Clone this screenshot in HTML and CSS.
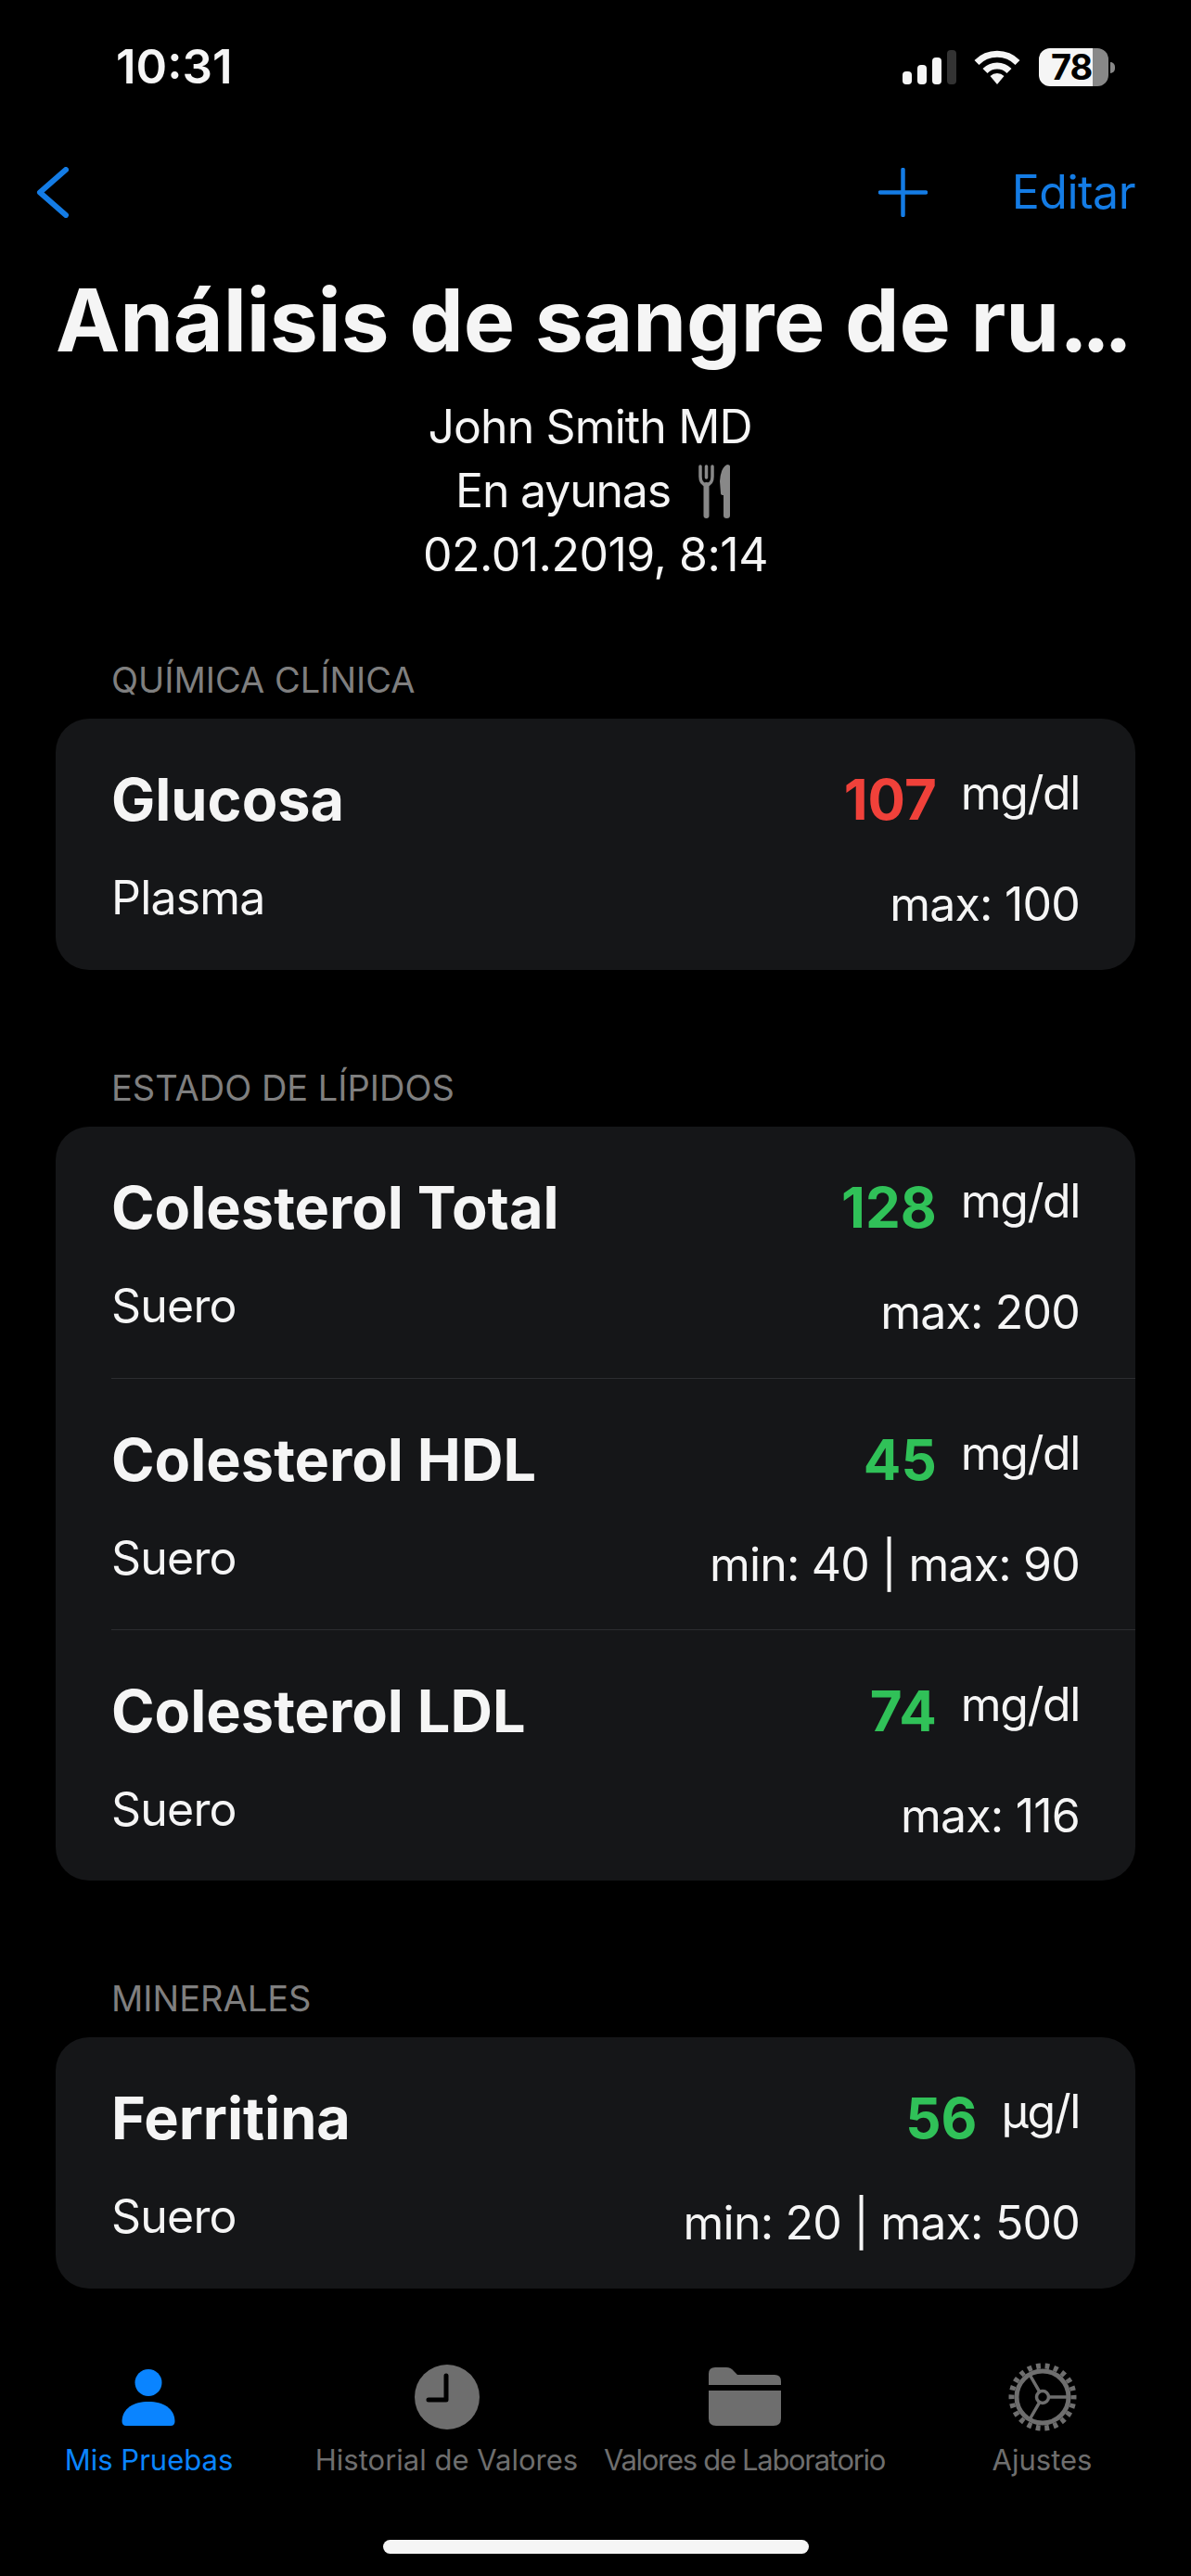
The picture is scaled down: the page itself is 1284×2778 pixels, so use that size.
FILE: index.html
```html
<!DOCTYPE html>
<html>
<head>
	<title>Análisis de sangre</title>
	<meta name="viewport" content="width=device-width,initial-scale=1">
	<link rel="stylesheet" href="styles.css">
</head>
<body>
	<div class="screen">
		<div class="status">
			<span class="time">10:31</span>
			<div class="status-icons">
				<svg class="signal" width="58" height="37" viewBox="0 0 58 37">
					<rect x="0" y="23" width="10" height="14" rx="4" fill="#f5f5f5"/>
					<rect x="16" y="16" width="10" height="21" rx="4" fill="#f5f5f5"/>
					<rect x="32" y="8" width="10" height="29" rx="4" fill="#f5f5f5"/>
					<rect x="48" y="0" width="10" height="37" rx="4" fill="#333"/>
				</svg>
				<svg class="wifi" width="50" height="37" viewBox="0 0 50 37">
					<path d="M3 13.500 A31 31 0 0 1 47 13.500" fill="none" stroke="#f5f5f5" stroke-width="7" />
					<path d="M12 22.500 A18 18 0 0 1 38 22.500" fill="none" stroke="#f5f5f5" stroke-width="7" />
					<path d="M17.500 28 A11 11 0 0 1 32.500 28 L25 37 Z" fill="#f5f5f5"/>
				</svg>
				<div class="battery"><span class="battery-level">78</span></div>
				<span class="battery-cap"></span>
			</div>
		</div>

		<div class="nav">
			<svg width="35" height="55" viewBox="0 0 35 55">
				<path d="M32 3 L4 27.500 L32 52" fill="none" stroke="#147ce5" stroke-width="6" stroke-linecap="round" stroke-linejoin="round"/>
			</svg>
			<div class="nav-right">
				<svg width="53" height="53" viewBox="0 0 53 53">
					<path d="M26.500 2 V51 M2 26.500 H51" fill="none" stroke="#147ce5" stroke-width="4.500" stroke-linecap="round"/>
				</svg>
				<span class="edit">Editar</span>
			</div>
		</div>

		<h1 class="title">Análisis de sangre de ru<span class="title-dots">...</span></h1>

		<div class="meta">
			<div class="meta-doctor">John Smith MD</div>
			<div class="meta-fasting">En ayunas
				<svg width="34" height="58" viewBox="0 0 34 58">
					<path d="M2 2 V13 Q2 21 8.500 22 M8.500 2 V14 M15 2 V13 Q15 21 8.500 22" fill="none" stroke="#888" stroke-width="3.500" stroke-linecap="round"/>
					<path d="M8.500 22 V55" stroke="#888" stroke-width="6" stroke-linecap="round"/>
					<path d="M31 0 Q24 3 23 18 L24 31 Q24 33 27 33 V55 Q27 58 30.500 58 Q34 58 34 55 V2 Q34 0 31 0 Z" fill="#888"/>
				</svg>
			</div>
			<div class="meta-date">02.01.2019, 8:14</div>
		</div>

		<div class="section">
			<div class="section-label">QUÍMICA CLÍNICA</div>
			<div class="card">
				<div class="row">
					<div class="line">
						<span class="name">Glucosa</span>
						<div class="result"><span class="value high">107</span><span class="unit">mg/dl</span></div>
					</div>
					<div class="line line-sub">
						<span class="sub">Plasma</span>
						<span class="range">max: 100</span>
					</div>
				</div>
			</div>
		</div>

		<div class="section">
			<div class="section-label">ESTADO DE LÍPIDOS</div>
			<div class="card">
				<div class="row">
					<div class="line">
						<span class="name">Colesterol Total</span>
						<div class="result"><span class="value ok">128</span><span class="unit">mg/dl</span></div>
					</div>
					<div class="line line-sub">
						<span class="sub">Suero</span>
						<span class="range">max: 200</span>
					</div>
				</div>
				<div class="row">
					<div class="line">
						<span class="name">Colesterol HDL</span>
						<div class="result"><span class="value ok">45</span><span class="unit">mg/dl</span></div>
					</div>
					<div class="line line-sub">
						<span class="sub">Suero</span>
						<span class="range">min: 40 | max: 90</span>
					</div>
				</div>
				<div class="row">
					<div class="line">
						<span class="name">Colesterol LDL</span>
						<div class="result"><span class="value ok">74</span><span class="unit">mg/dl</span></div>
					</div>
					<div class="line line-sub">
						<span class="sub">Suero</span>
						<span class="range">max: 116</span>
					</div>
				</div>
			</div>
		</div>

		<div class="section">
			<div class="section-label">MINERALES</div>
			<div class="card">
				<div class="row">
					<div class="line">
						<span class="name">Ferritina</span>
						<div class="result"><span class="value ok">56</span><span class="unit">µg/l</span></div>
					</div>
					<div class="line line-sub">
						<span class="sub">Suero</span>
						<span class="range">min: 20 | max: 500</span>
					</div>
				</div>
			</div>
		</div>

		<div class="tabbar">
			<div class="tab active">
				<svg width="80" height="80" viewBox="1 0 80 80">
					<ellipse cx="40" cy="24.500" rx="14.500" ry="14.500" fill="#0a84ff"/>
					<path d="M11.500 66 C12 52 24 45 40 45 C56 45 68 52 68.500 66 Q68.500 71 64 71 H16 Q11.500 71 11.500 66 Z" fill="#0a84ff"/>
				</svg>
				<span>Mis Pruebas</span>
			</div>
			<div class="tab">
				<svg width="80" height="80" viewBox="0 0 80 80">
					<circle cx="40" cy="40" r="35" fill="#6e6e6e"/>
					<path d="M39 17 V43 H20" fill="none" stroke="#000" stroke-width="5" stroke-linecap="round" stroke-linejoin="round"/>
				</svg>
				<span>Historial de Valores</span>
			</div>
			<div class="tab">
				<svg width="80" height="80" viewBox="0 0 80 80">
					<path d="M1 23 V15 Q1 8 8 8 H20 Q25 8 28 12 L32 16 H72 Q79 16 79 23 V27 H1 Z" fill="#6e6e6e"/>
					<path d="M1 33 H79 V63 Q79 71 71 71 H9 Q1 71 1 63 Z" fill="#6e6e6e"/>
				</svg>
				<span class="tab-tight">Valores de Laboratorio</span>
			</div>
			<div class="tab">
				<svg width="80" height="80" viewBox="0 0 80 80">
					<g fill="none" stroke="#6e6e6e">
						<circle cx="40" cy="40" r="33.500" stroke-width="6" stroke-dasharray="4.784 4.784" stroke-dashoffset="2.392"/>
						<circle cx="40" cy="40" r="28" stroke-width="5"/>
						<circle cx="40" cy="40" r="6.500" stroke-width="3.500"/>
						<path d="M46.500 40 H68 M36.750 34.400 L26 15.750 M36.750 45.600 L26 64.250" stroke-width="3.500"/>
					</g>
				</svg>
				<span>Ajustes</span>
			</div>
		</div>
		<div class="home-bar"></div>
	</div>
</body>
</html>
```
FILE: styles.css
```css
*{
	box-sizing: border-box;
	padding: 0;
	margin: 0;
}

body{
	background-color: #000;
	color: #f5f5f5;
	font-family: Inter, "Liberation Sans", sans-serif;
}

.screen{
	width: 1284px;
	height: 2778px;
	display: flex;
	flex-direction: column;
	overflow: hidden;
}

/* status bar ------------------------------------- */
.status{
	height: 144px;
	padding: 52px 82px 0 125px;
	display: flex;
	justify-content: space-between;
	align-items: flex-start;
}
.time{
	font-size: 51px;
	line-height: 40px;
	font-weight: 600;
}
.status-icons{
	display: flex;
	align-items: center;
	height: 41px;
}
.wifi{
	margin-left: 19px;
}
.battery{
	width: 75px;
	height: 41px;
	margin-left: 20px;
	border-radius: 12px;
	background: linear-gradient(to right, #f5f5f5 58px, #888 58px);
	color: #000;
	font-size: 38px;
	font-weight: 700;
	line-height: 41px;
	letter-spacing: -1px;
}
.battery-level{
	display: block;
	padding-left: 13px;
}
.battery-cap{
	width: 5px;
	height: 12px;
	margin-left: 2px;
	border-radius: 0 6px 6px 0;
	background-color: #888;
}

/* nav ---------------------------------------------- */
.nav{
	height: 126px;
	padding: 0 60px 0 39px;
	display: flex;
	justify-content: space-between;
	align-items: center;
}
.nav-right{
	display: flex;
	align-items: center;
	gap: 91px;
}
.edit{
	color: #147ce5;
	font-size: 50px;
	letter-spacing: -0.5px;
}

.title{
	margin-top: 20px;
	padding-right: 3px;
	font-size: 93px;
	line-height: 110px;
	font-weight: 700;
	letter-spacing: -0.2px;
	text-align: center;
	white-space: nowrap;
}
.title-dots{
	letter-spacing: -7px;
	margin-right: 7px;
}

.meta{
	margin-top: 26px;
	font-size: 50px;
	line-height: 69px;
	letter-spacing: -0.9px;
	text-align: center;
}
.meta-doctor{
	margin-right: 12px;
}
.meta-fasting{
	display: flex;
	justify-content: center;
	align-items: center;
	gap: 30px;
	height: 69px;
	margin-right: 6px;
	letter-spacing: -1.2px;
}
.meta-date{
	letter-spacing: -0.5px;
}

/* sections ---------------------------------------- */
.section{
	margin-top: 104px;
}
.meta + .section{
	margin-top: 77px;
}
.section-label{
	padding-left: 120px;
	margin-bottom: 19px;
	color: #7f7f7f;
	font-size: 38px;
	line-height: 46px;
}
.card{
	margin: 0 60px;
	background-color: #151618;
	border-radius: 36px;
	overflow: hidden;
}
.row{
	height: 271px;
	margin-left: 60px;
	padding: 52px 60px 0 0;
	border-top: 1px solid #2c2d30;
}
.row:first-child{
	border-top: none;
}
.line{
	display: flex;
	justify-content: space-between;
	align-items: flex-start;
}
.line-sub{
	margin-top: 41px;
}
.name{
	font-size: 63px;
	line-height: 70px;
	font-weight: 700;
}
.result{
	display: flex;
	align-items: flex-start;
	gap: 26px;
}
.value{
	font-size: 60px;
	line-height: 70px;
	font-weight: 700;
}
.value.high{
	color: #f0413a;
}
.value.ok{
	color: #30c158;
}
.unit{
	font-size: 50px;
	line-height: 56px;
	letter-spacing: -1.4px;
}
.sub, .range{
	font-size: 50px;
	line-height: 60px;
	letter-spacing: -0.8px;
}
.range{
	margin-top: 7px;
}

/* tab bar --------------------------------------------- */
.tabbar{
	margin-top: auto;
	display: grid;
	grid-template-columns: repeat(4, 321px);
}
.tab{
	display: flex;
	flex-direction: column;
	align-items: center;
	gap: 8px;
	color: #6e6e6e;
	font-size: 31px;
	line-height: 40px;
	white-space: nowrap;
}
.tab.active{
	color: #0a84ff;
}
.tab-tight{
	letter-spacing: -1.3px;
}
.home-bar{
	width: 459px;
	height: 15px;
	margin: 66px auto 24px;
	border-radius: 8px;
	background-color: #f5f5f5;
}
```
